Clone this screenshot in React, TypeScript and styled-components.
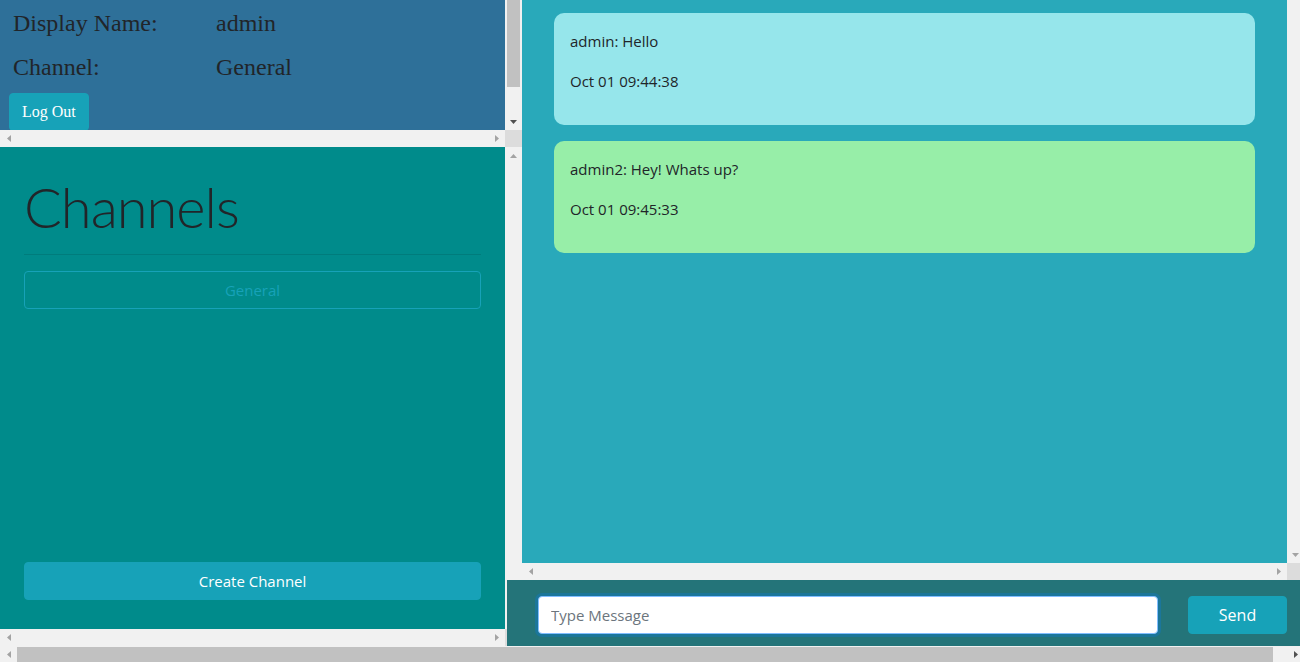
import React from 'react';
import styled, { createGlobalStyle } from 'styled-components';

const GlobalStyle = createGlobalStyle`
  html, body { margin: 0; padding: 0; }
  body {
    font-family: "Open Sans", "Noto Sans", sans-serif;
    color: #212529;
    overflow: hidden;
    background: #ffffff;
  }
  *, *::before, *::after { box-sizing: border-box; }
`;

/* ---------- scrollbar pieces ---------- */

type Dir = 'up' | 'down' | 'left' | 'right';

const ArrowPoints: Record<Dir, { w: number; h: number; pts: string }> = {
  up: { w: 7, h: 4, pts: '0,4 3.5,0 7,4' },
  down: { w: 7, h: 4, pts: '0,0 7,0 3.5,4' },
  left: { w: 4, h: 7, pts: '4,0 4,7 0,3.5' },
  right: { w: 4, h: 7, pts: '0,0 4,3.5 0,7' },
};

const ScrollButton = styled.div`
  width: 17px;
  height: 17px;
  flex: none;
  display: flex;
  align-items: center;
  justify-content: center;
`;

const ArrowIcon: React.FC<{ dir: Dir; active?: boolean }> = ({ dir, active }) => {
  const a = ArrowPoints[dir];
  return (
    <ScrollButton>
      <svg width={a.w} height={a.h} viewBox={`0 0 ${a.w} ${a.h}`}>
        <polygon points={a.pts} fill={active ? '#505050' : '#A3A3A3'} />
      </svg>
    </ScrollButton>
  );
};

const VTrack = styled.div`
  grid-area: v;
  background: #f1f1f1;
  display: flex;
  flex-direction: column;
  min-height: 0;
  overflow: hidden;
`;

const HTrack = styled.div`
  grid-area: h;
  background: #f1f1f1;
  display: flex;
  flex-direction: row;
  min-width: 0;
  overflow: hidden;
`;

const TrackFill = styled.div`
  flex: 1;
`;

const VThumb = styled.div<{ $size: number }>`
  flex: none;
  width: 13px;
  margin: 0 2px;
  height: ${({ $size }) => $size}px;
  background: #c1c1c1;
`;

const HThumb = styled.div<{ $size: number }>`
  flex: none;
  height: 15px;
  margin-top: 1px;
  width: ${({ $size }) => $size}px;
  background: #c1c1c1;
`;

const Corner = styled.div`
  grid-area: c;
  background: #dcdcdc;
`;

const Frame = styled.div`
  display: grid;
  grid-template-columns: minmax(0, 1fr) 17px;
  grid-template-rows: minmax(0, 1fr) 17px;
  grid-template-areas: "body v" "h c";
  min-height: 0;
  min-width: 0;
`;

const HScrollDisabled: React.FC = () => (
  <HTrack>
    <ArrowIcon dir="left" />
    <TrackFill />
    <ArrowIcon dir="right" />
  </HTrack>
);

/* ---------- page layout ---------- */

const Viewport = styled.div`
  width: 1300px;
  height: 662px;
  overflow: hidden;
  display: grid;
  grid-template-rows: 646px 17px;
`;

const Main = styled.div`
  width: 1304px;
  display: grid;
  grid-template-columns: 507px 15px 782px;
  grid-template-rows: 580px 66px;
`;

const LeftColumn = styled.div`
  grid-column: 1 / 3;
  grid-row: 1 / 3;
  display: grid;
  grid-template-rows: 147px 499px;
`;

/* ---------- profile panel ---------- */

const ProfileBody = styled.div`
  grid-area: body;
  background: #2e7099;
  overflow: hidden;
  padding-top: 1px;
`;

const InfoGrid = styled.div`
  display: grid;
  grid-template-columns: 203px auto;
  padding-left: 13px;
  font-family: "Liberation Serif", "Times New Roman", serif;
  font-size: 24px;
  line-height: 44px;
  color: #212529;
`;

const LogOutButton = styled.button`
  display: block;
  margin: 4px 0 0 9px;
  height: 38px;
  padding: 0 12px;
  background: #17a2b8;
  border: 1px solid #17a2b8;
  border-radius: 4px;
  color: #ffffff;
  font-family: "Liberation Serif", "Times New Roman", serif;
  font-size: 16px;
  line-height: 24px;
  cursor: pointer;
`;

/* ---------- channels panel ---------- */

const ChannelsBody = styled.div`
  grid-area: body;
  background: #008b8b;
  overflow: hidden;
  display: flex;
  flex-direction: column;
  padding: 26px 24px 29px;
`;

const ChannelsTitle = styled.h1`
  margin: 0;
  font-family: "Lato", "Open Sans", sans-serif;
  font-weight: 300;
  font-size: 56px;
  line-height: 67px;
  letter-spacing: -1px;
  color: #212529;
`;

const Rule = styled.hr`
  margin: 14px 0 0;
  border: 0;
  border-top: 1px solid rgba(0, 0, 0, 0.1);
`;

const BlockButton = styled.button<{ $outline?: boolean }>`
  display: block;
  width: 100%;
  height: 38px;
  border-radius: 4px;
  border: 1px solid #17a2b8;
  background: ${({ $outline }) => ($outline ? 'transparent' : '#17a2b8')};
  color: ${({ $outline }) => ($outline ? '#17a2b8' : '#ffffff')};
  font-family: "Open Sans", sans-serif;
  font-size: 15px;
  line-height: 24px;
  cursor: pointer;
`;

const ChannelList = styled.div`
  margin-top: 16px;
  flex: 1;
`;

/* ---------- chat panel ---------- */

const ChatPanel = styled(Frame)`
  grid-column: 3;
  grid-row: 1;
`;

const ChatBody = styled.div`
  grid-area: body;
  background: #29a9ba;
  overflow: hidden;
  padding: 13px 32px 0;
  display: flex;
  flex-direction: column;
  gap: 16px;
`;

const MessageCard = styled.div<{ $tone: 'cyan' | 'green' }>`
  background: ${({ $tone }) => ($tone === 'cyan' ? '#96e6eb' : '#97eea8')};
  border-radius: 10px;
  padding: 16px;
  font-size: 15px;
  line-height: 24px;
  color: #212529;
`;

const MessageLine = styled.p`
  margin: 0 0 16px;
`;

/* ---------- input bar ---------- */

const InputBar = styled.div`
  grid-column: 2 / 4;
  grid-row: 2;
  z-index: 1;
  background: #247479;
  display: flex;
  align-items: flex-start;
  gap: 30px;
  padding: 16px 17px 0 31px;
`;

const MessageInput = styled.input`
  flex: 1;
  min-width: 0;
  height: 38px;
  padding: 6px 12px;
  border: 1px solid #80bdff;
  border-radius: 4px;
  background: #ffffff;
  box-shadow: 0 0 0 3px rgba(0, 123, 255, 0.25);
  font-family: "Open Sans", sans-serif;
  font-size: 15px;
  color: #495057;
  outline: none;
  &::placeholder { color: #6c757d; }
`;

const SendButton = styled.button`
  flex: none;
  width: 99px;
  height: 38px;
  border: 1px solid #17a2b8;
  border-radius: 4px;
  background: #17a2b8;
  color: #ffffff;
  font-family: "Open Sans", sans-serif;
  font-size: 16px;
  cursor: pointer;
`;

/* ---------- page scrollbar ---------- */

const PageScroll = styled.div`
  background: #f1f1f1;
  display: flex;
  flex-direction: row;
`;

const messages = [
  { tone: 'cyan' as const, text: 'admin: Hello', time: 'Oct 01 09:44:38' },
  { tone: 'green' as const, text: 'admin2: Hey! Whats up?', time: 'Oct 01 09:45:33' },
];

export default function App() {
  return (
    <>
      <GlobalStyle />
      <Viewport>
        <Main>
          <LeftColumn>
            <Frame>
              <ProfileBody>
                <InfoGrid>
                  <span>Display Name:</span>
                  <span>admin</span>
                  <span>Channel:</span>
                  <span>General</span>
                </InfoGrid>
                <LogOutButton>Log Out</LogOutButton>
              </ProfileBody>
              <VTrack>
                <VThumb $size={87} />
                <TrackFill />
                <ArrowIcon dir="down" active />
              </VTrack>
              <HScrollDisabled />
              <Corner />
            </Frame>
            <Frame>
              <ChannelsBody>
                <ChannelsTitle>Channels</ChannelsTitle>
                <Rule />
                <ChannelList>
                  <BlockButton $outline>General</BlockButton>
                </ChannelList>
                <BlockButton>Create Channel</BlockButton>
              </ChannelsBody>
              <VTrack>
                <ArrowIcon dir="up" />
                <TrackFill />
                <ArrowIcon dir="down" />
              </VTrack>
              <HScrollDisabled />
              <Corner />
            </Frame>
          </LeftColumn>

          <ChatPanel>
            <ChatBody>
              {messages.map((m) => (
                <MessageCard key={m.time} $tone={m.tone}>
                  <MessageLine>{m.text}</MessageLine>
                  <MessageLine>{m.time}</MessageLine>
                </MessageCard>
              ))}
            </ChatBody>
            <VTrack>
              <TrackFill />
              <ArrowIcon dir="down" />
            </VTrack>
            <HScrollDisabled />
            <Corner />
          </ChatPanel>

          <InputBar>
            <MessageInput placeholder="Type Message" />
            <SendButton>Send</SendButton>
          </InputBar>
        </Main>
        <PageScroll>
          <ArrowIcon dir="left" />
          <HThumb $size={1256} />
          <TrackFill />
          <ArrowIcon dir="right" active />
        </PageScroll>
      </Viewport>
    </>
  );
}
